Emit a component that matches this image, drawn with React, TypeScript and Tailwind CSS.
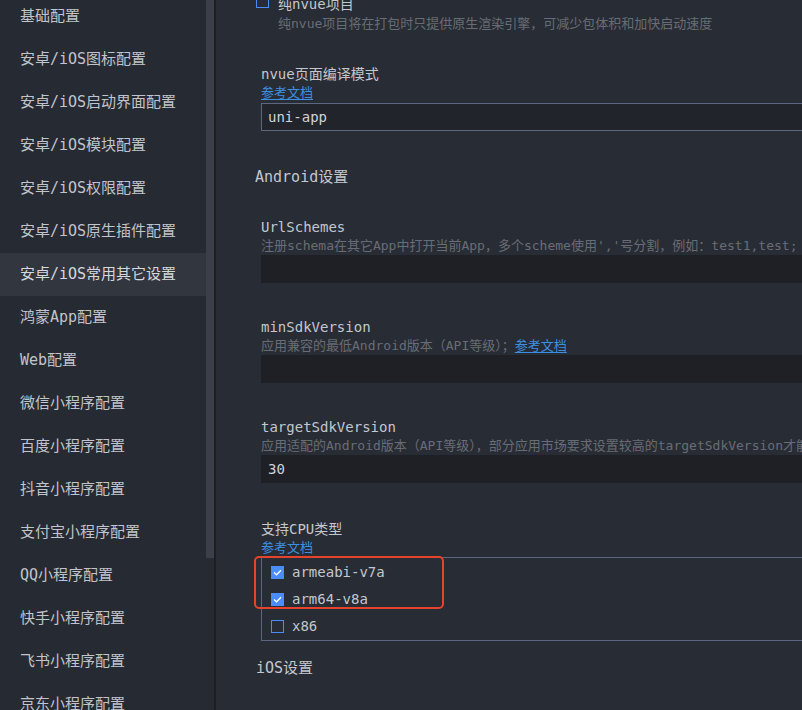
import React from "react";

const FONT = '"DejaVu Sans Mono", "Noto Sans CJK SC", monospace';

const items = [
  "基础配置",
  "安卓/iOS图标配置",
  "安卓/iOS启动界面配置",
  "安卓/iOS模块配置",
  "安卓/iOS权限配置",
  "安卓/iOS原生插件配置",
  "安卓/iOS常用其它设置",
  "鸿蒙App配置",
  "Web配置",
  "微信小程序配置",
  "百度小程序配置",
  "抖音小程序配置",
  "支付宝小程序配置",
  "QQ小程序配置",
  "快手小程序配置",
  "飞书小程序配置",
  "京东小程序配置",
];

function Check({ checked }: { checked: boolean }) {
  return checked ? (
    <span className="w-[13px] h-[13px] bg-[#4b8df8] flex items-center justify-center shrink-0">
      <svg width="9" height="7" viewBox="0 0 9 7">
        <path d="M1 3.5 L3.5 5.8 L8 1.2" fill="none" stroke="#ffffff" strokeWidth="1.3" />
      </svg>
    </span>
  ) : (
    <span className="w-[13px] h-[13px] border border-[#4b8df8] shrink-0" />
  );
}

function Field({
  label,
  desc,
  value,
}: {
  label: string;
  desc: React.ReactNode;
  value?: string;
}) {
  return (
    <div className="ml-[45px] mt-[34px]">
      <div className="h-[20px] leading-[20px] text-[14px] text-[#c4c7cd] whitespace-nowrap">{label}</div>
      <div className="h-[18px] leading-[17px] text-[13px] text-[#686c74] whitespace-nowrap">{desc}</div>
      <div className="h-[28px] w-[700px] bg-[#1e2025] flex items-center pl-[7px] text-[14px] text-[#d0d3d8]">
        {value}
      </div>
    </div>
  );
}

export default function App() {
  return (
    <div
      className="w-[802px] h-[710px] flex overflow-hidden bg-[#282c35]"
      style={{ fontFamily: FONT }}
    >
      {/* Sidebar */}
      <div className="w-[206px] shrink-0 bg-[#262a33] overflow-hidden">
        <div className="mt-[-5px]">
          {items.map((t, i) => (
            <div
              key={t}
              className={
                "h-[43px] flex items-center pl-[20px] text-[15px] whitespace-nowrap " +
                (i === 6 ? "bg-[#32363f] text-[#d6d8dc]" : "text-[#c1c4ca]")
              }
            >
              {t}
            </div>
          ))}
        </div>
      </div>
      {/* Scrollbar */}
      <div className="w-[8px] shrink-0 bg-[#262a33] flex flex-col">
        <div className="h-[558px] bg-[#3a3f4a]" />
      </div>
      <div className="w-[2px] shrink-0 bg-[#1c1e23]" />

      {/* Content */}
      <div className="flex-1 relative overflow-hidden">
        <div className="mt-[-6px]">
          <div className="ml-[40px] flex items-center h-[20px]">
            <span className="w-[13px] h-[13px] border border-[#4b8df8] mt-[-6px]" />
            <span className="ml-[9px] text-[14px] text-[#c4c7cd] leading-[20px]">纯nvue项目</span>
          </div>
          <div className="ml-[62px] h-[20px] leading-[20px] text-[13px] text-[#686c74] whitespace-nowrap">
            纯nvue项目将在打包时只提供原生渲染引擎，可减少包体积和加快启动速度
          </div>

          <div className="ml-[45px] mt-[30px]">
            <div className="h-[20px] leading-[20px] text-[14px] text-[#c4c7cd]">nvue页面编译模式</div>
            <div className="h-[19px] leading-[18px] text-[13px] text-[#3d8fe0] underline underline-offset-2">
              参考文档
            </div>
            <div className="h-[28px] w-[700px] bg-[#21242a] border border-[#5d6880] flex items-center pl-[6px] text-[14px] text-[#d0d3d8]">
              uni-app
            </div>
          </div>

          <div className="ml-[39px] mt-[36px] h-[20px] leading-[20px] text-[15px] text-[#c4c7cd]">
            Android设置
          </div>

          <div className="mt-[-4px]">
            <Field
              label="UrlSchemes"
              desc="注册schema在其它App中打开当前App，多个scheme使用','号分割，例如：test1,test;"
            />
            <Field
              label="minSdkVersion"
              desc={
                <>
                  应用兼容的最低Android版本（API等级）；
                  <span className="text-[#3d8fe0] underline underline-offset-2">参考文档</span>
                </>
              }
            />
            <Field
              label="targetSdkVersion"
              desc="应用适配的Android版本（API等级），部分应用市场要求设置较高的targetSdkVersion才能上架"
              value="30"
            />
          </div>

          <div className="ml-[45px] mt-[36px]">
            <div className="h-[20px] leading-[20px] text-[14px] text-[#c4c7cd]">支持CPU类型</div>
            <div className="h-[18px] leading-[18px] text-[13px] text-[#3d8fe0]">参考文档</div>
            <div className="w-[700px] border border-[#5d6880] flex flex-col pt-[1px]">
              {[
                ["armeabi-v7a", true],
                ["arm64-v8a", true],
                ["x86", false],
              ].map(([t, c]) => (
                <div key={t as string} className="h-[27px] flex items-center pl-[9px]">
                  <Check checked={c as boolean} />
                  <span className="ml-[8px] text-[14px] text-[#c4c7cd]">{t as string}</span>
                </div>
              ))}
            </div>
          </div>

          <div className="ml-[40px] mt-[17px] h-[20px] leading-[20px] text-[15px] text-[#c4c7cd]">
            iOS设置
          </div>
        </div>

        {/* Annotation */}
        <div className="absolute left-[38px] top-[556px] w-[190px] h-[53px] border-2 border-[#e5432b] rounded-[5px]" />
      </div>
    </div>
  );
}
